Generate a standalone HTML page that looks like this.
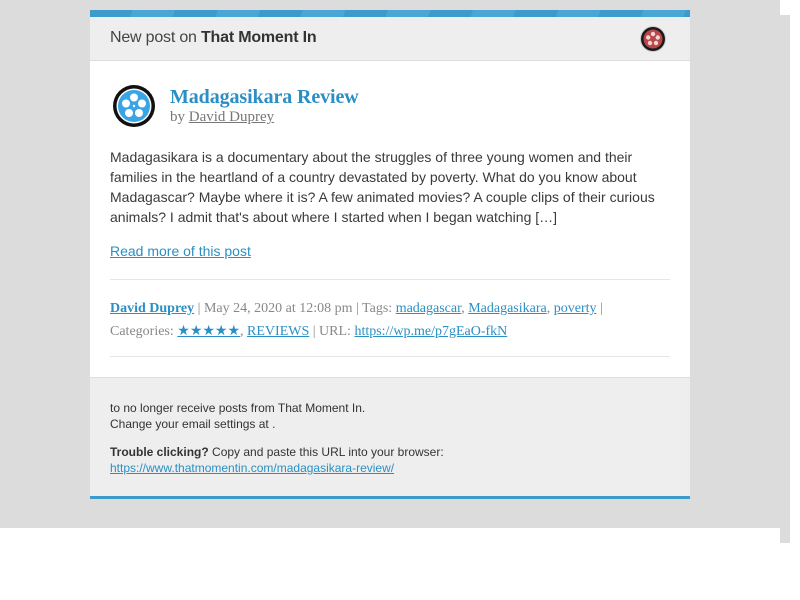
<!DOCTYPE html>
<html><head><style>
body{margin:0;background:#fff;width:800px;height:600px;position:relative;overflow:hidden;font-family:"Liberation Sans",Arial,sans-serif}
.bg{position:absolute;left:0;top:0;width:780px;height:528px;background:#dcdcdc}
.bg2{position:absolute;left:780px;top:15px;width:10px;height:528px;background:#dcdcdc}
.card{position:absolute;left:90px;top:10px;width:600px;background:#fff}
.top{height:7px;background:repeating-linear-gradient(110deg,#3d9bcb 0 40px,#4aa6d4 40px 80px)}
.hdr{height:43px;background:#eee;border-bottom:1px solid #ddd;position:relative}
.hdr .t{position:absolute;left:20px;top:12px;font-size:16px;color:#444;letter-spacing:-0.2px}
.hdr .t b{color:#333}
a{color:#2a8fc4}
.serif{font-family:"Liberation Serif",serif}
.body{padding:0 20px;position:relative;height:316px}
.p{position:absolute;left:20px;top:86px;width:565px;font-size:14px;line-height:20px;color:#3a3a3a}
.foot{background:#eee;border-top:1px solid #ddd;height:118px;position:relative;font-size:12px;color:#333;line-height:16px}
.bot{height:3px;background:#3d9bcb}
svg{position:absolute}
</style></head><body>
<div class="bg"></div><div class="bg2"></div>
<div class="card">
<div class="top"></div>
<div class="hdr"><div class="t">New post on <b>That Moment In</b></div>
<svg style="left:549px;top:8px" width="28" height="28" viewBox="0 0 28 28"><circle cx="14" cy="14" r="13" fill="#ccc"/><circle cx="14" cy="14" r="12" fill="#1a1a1a"/><circle cx="14" cy="14" r="9.5" fill="#b84848"/><g fill="#f2d6d6"><circle cx="14" cy="9" r="2.2"/><circle cx="18.8" cy="12.5" r="2.2"/><circle cx="17" cy="18" r="2.2"/><circle cx="11" cy="18" r="2.2"/><circle cx="9.2" cy="12.5" r="2.2"/></g></svg>
</div>
<div class="body">
<svg style="left:22px;top:23px" width="44" height="44" viewBox="0 0 44 44"><circle cx="22" cy="22" r="21" fill="#111"/><circle cx="22" cy="22" r="17.5" fill="#fff"/><circle cx="22" cy="22" r="16" fill="#3aa5e6"/><g fill="#fff"><circle cx="22" cy="13.5" r="4"/><circle cx="30" cy="19.5" r="4"/><circle cx="27" cy="29" r="4"/><circle cx="17" cy="29" r="4"/><circle cx="14" cy="19.5" r="4"/><circle cx="22" cy="22" r="1.2"/></g></svg>
<div class="serif" style="position:absolute;left:80px;top:25px;font-size:20px;font-weight:bold;color:#2a8fc4;letter-spacing:-0.1px">Madagasikara Review</div>
<div class="serif" style="position:absolute;left:80px;top:48px;font-size:15px;color:#777">by <a style="color:#777" href="#">David Duprey</a></div>
<div class="p">Madagasikara is a documentary about the struggles of three young women and their families in the heartland of a country devastated by poverty. What do you know about Madagascar? Maybe where it is? A few animated movies? A couple clips of their curious animals? I admit that's about where I started when I began watching […]</div>
<div style="position:absolute;left:20px;top:182px;font-size:14px"><a href="#">Read more of this post</a></div>
<div style="position:absolute;left:20px;top:218px;width:560px;border-top:1px solid #e5e5e5"></div>
<div class="serif" style="position:absolute;left:20px;top:286px;width:570px;font-size:14px;line-height:23px;color:#888;top:285px"></div>
<div class="serif" style="position:absolute;left:20px;top:236px;width:570px;font-size:14px;line-height:23px;color:#888"><a href="#"><b>David Duprey</b></a> | May 24, 2020 at 12:08 pm | Tags: <a href="#">madagascar</a>, <a href="#">Madagasikara</a>, <a href="#">poverty</a> |<br>Categories: <a href="#">★★★★★</a>, <a href="#">REVIEWS</a> | URL: <a href="#">https://wp.me/p7gEaO-fkN</a></div>
<div style="position:absolute;left:20px;top:295px;width:560px;border-top:1px solid #e5e5e5"></div>
</div>
<div class="foot">
<div style="position:absolute;left:20px;top:22px">to no longer receive posts from That Moment In.<br>Change your email settings at .</div>
<div style="position:absolute;left:20px;top:66px"><b>Trouble clicking?</b> Copy and paste this URL into your browser:<br><a href="#">https://www.thatmomentin.com/madagasikara-review/</a></div>
</div>
<div class="bot"></div>
</div>
</body></html>
